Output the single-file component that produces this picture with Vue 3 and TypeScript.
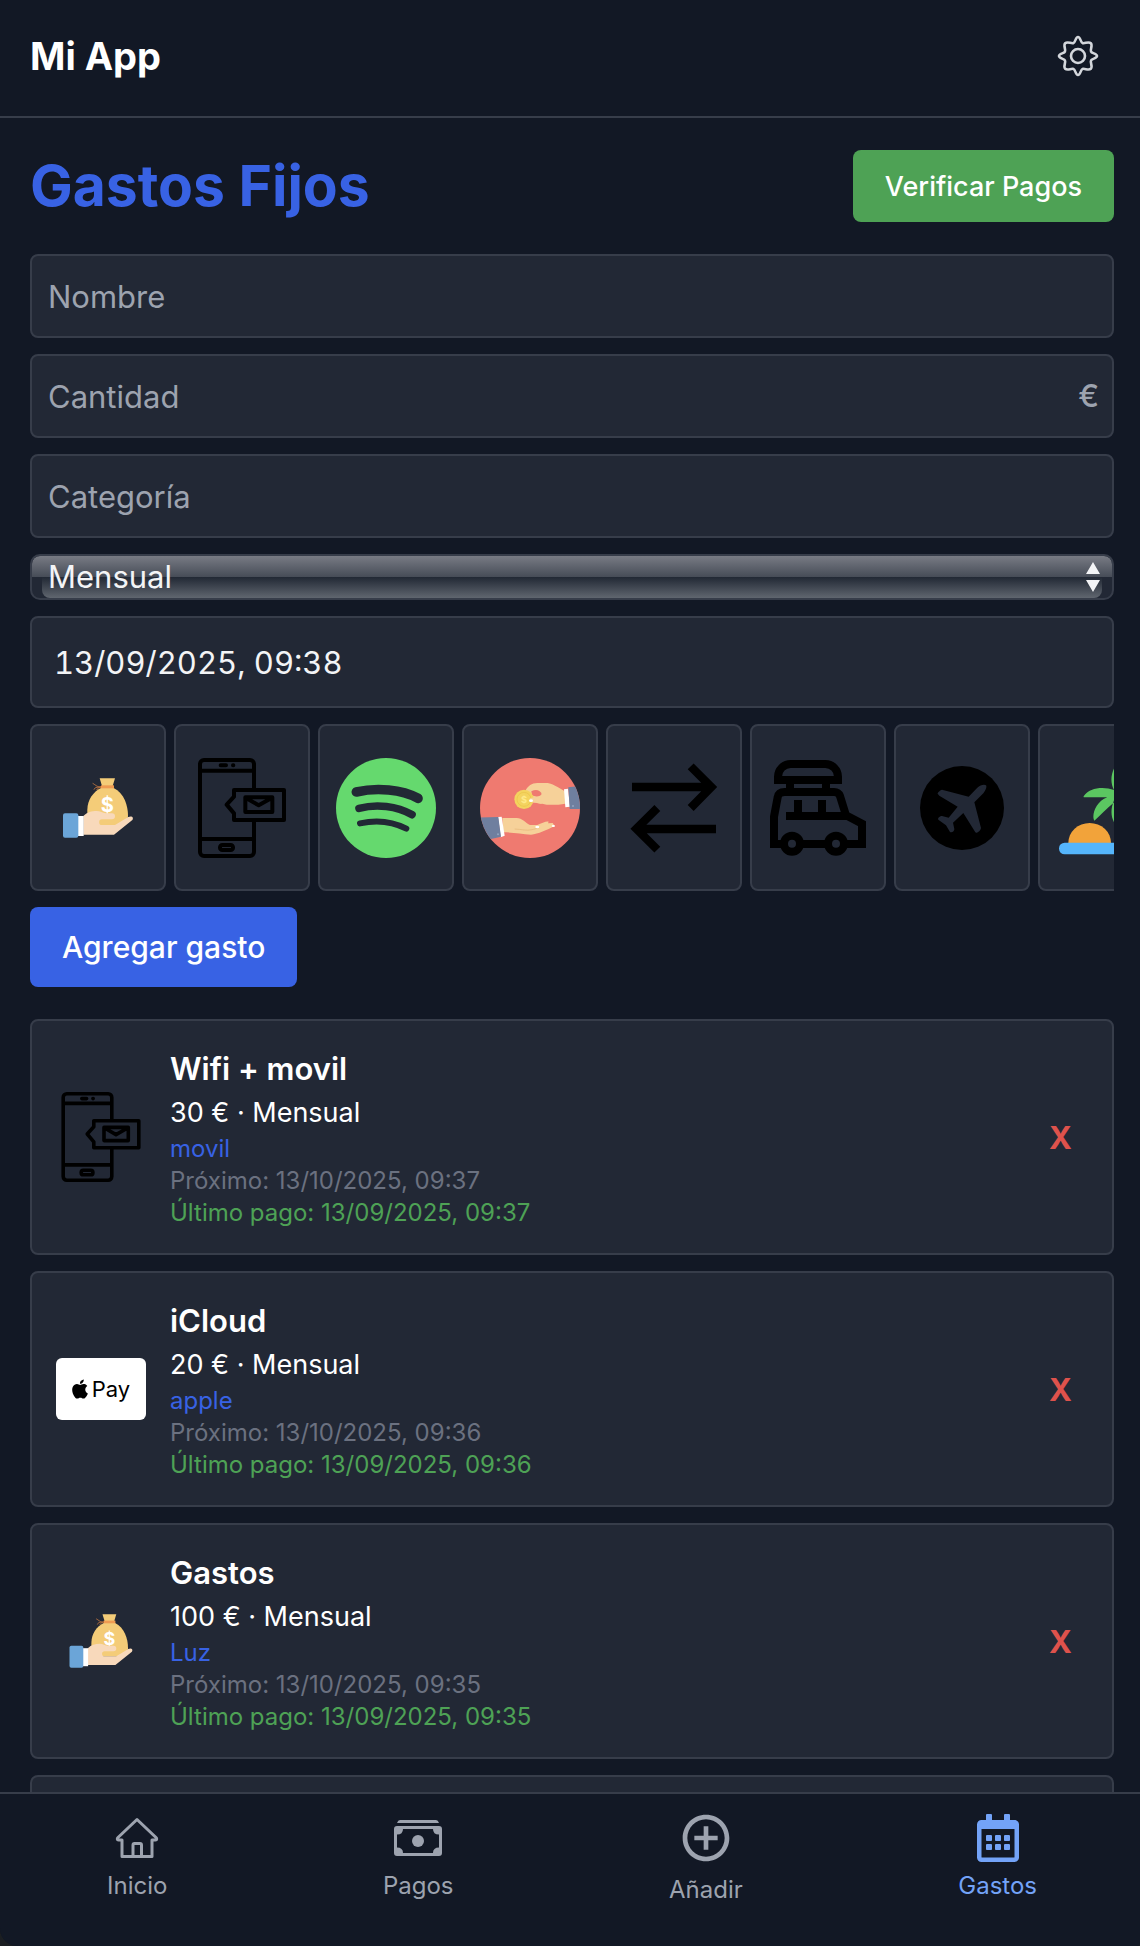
<script setup lang="ts">
import { ref } from 'vue'

type IconName = 'money' | 'phone' | 'spotify' | 'loan' | 'transfer' | 'car' | 'plane' | 'beach' | 'applepay'

interface Gasto {
  id: number
  nombre: string
  cantidad: number
  frecuencia: string
  categoria: string
  proximo: string
  ultimo: string
  icono: IconName
}

const nombre = ref('')
const cantidad = ref('')
const categoria = ref('')
const frecuencia = ref('Mensual')
const fecha = ref('13/09/2025, 09:38')

const iconos: IconName[] = ['money', 'phone', 'spotify', 'loan', 'transfer', 'car', 'plane', 'beach']

const gastos = ref<Gasto[]>([
  { id: 1, nombre: 'Wifi + movil', cantidad: 30, frecuencia: 'Mensual', categoria: 'movil', proximo: '13/10/2025, 09:37', ultimo: '13/09/2025, 09:37', icono: 'phone' },
  { id: 2, nombre: 'iCloud', cantidad: 20, frecuencia: 'Mensual', categoria: 'apple', proximo: '13/10/2025, 09:36', ultimo: '13/09/2025, 09:36', icono: 'applepay' },
  { id: 3, nombre: 'Gastos', cantidad: 100, frecuencia: 'Mensual', categoria: 'Luz', proximo: '13/10/2025, 09:35', ultimo: '13/09/2025, 09:35', icono: 'money' },
])

function quitar(id: number) {
  gastos.value = gastos.value.filter((g) => g.id !== id)
}
</script>

<template>
  <!-- Shared drawings, referenced by id -->
  <svg class="defs" width="0" height="0" aria-hidden="true">
    <symbol id="i-money" viewBox="144 144 300 300">
      <path d="M299 205H345L338 228H306Z" fill="#f4cc78" />
      <path d="M303 234H341C372 250 384 285 384 318C384 335 370 346 345 346H262V300C262 270 280 245 303 234Z" fill="#f4cc78" />
      <path d="M303 226H342V235H303Z" fill="#ef9b52" />
      <path d="M303 229C294 234 286 224 278 220M303 233C292 229 282 234 282 239M303 231C296 232 292 236 290 240" fill="none" stroke="#b9723f" stroke-width="3" />
      <text x="322" y="306" text-anchor="middle" font-family="Inter, sans-serif" font-size="60" font-weight="700" fill="#fff">$</text>
      <path d="M250 318C262 306 275 303 290 303C300 303 308 309 318 310H336A9 9 0 0 1 336 328H306A8 8 0 0 0 306 345H345L385 321C395 316 402 322 397 330L342 374H250Z" fill="#f8d9bb" />
      <rect x="233" y="318" width="18" height="60" fill="#fff" />
      <rect x="189" y="310" width="46" height="73" rx="6" fill="#6ba5d8" />
    </symbol>
    <symbol id="i-phone" viewBox="576 144 300 300">
      <g fill="none" stroke="#000" stroke-width="12" stroke-linejoin="round">
        <path d="M762 238V162A12 12 0 0 0 750 150H612A12 12 0 0 0 600 162V426A12 12 0 0 0 612 438H750A12 12 0 0 0 762 426V332" />
        <path d="M600 182H762M600 387H762" />
        <path d="M662 166H678M699 166H700" stroke-linecap="round" />
        <rect x="660" y="405" width="39" height="15" rx="7" />
        <path d="M702 240H852V330H702V310L680 284L702 260Z" />
        <path d="M736 262H817V306H736ZM738 264L776 286L815 264" />
      </g>
    </symbol>
    <symbol id="i-spotify" viewBox="1008 144 300 300">
      <circle cx="1158" cy="294" r="150" fill="#65d96e" />
      <g fill="none" stroke="#222835" stroke-linecap="round">
        <path d="M1069 246C1130 232 1205 238 1254 265" stroke-width="29" />
        <path d="M1077 295C1130 281 1190 288 1236 314" stroke-width="23" />
        <path d="M1080 340C1130 329 1175 333 1219 356" stroke-width="18" />
      </g>
    </symbol>
    <symbol id="i-loan" viewBox="90 144 300 300">
      <clipPath id="loan-clip"><circle cx="240" cy="294" r="150" /></clipPath>
      <g clip-path="url(#loan-clip)">
        <rect x="90" y="144" width="300" height="300" fill="#ef7a70" />
        <path d="M226 242C234 228 245 219 262 219H292C302 219 326 232 346 245V281C325 285 305 285 290 284C275 282 260 277 244 278Z" fill="#f6d199" />
        <path d="M244 244C258 237 270 240 275 252C268 262 255 260 246 256Z" fill="#ef7a70" />
        <circle cx="222" cy="268" r="29" fill="#f4d35f" />
        <circle cx="222" cy="268" r="21" fill="none" stroke="#eac348" stroke-width="2" />
        <text x="222" y="278" text-anchor="middle" font-family="Inter, sans-serif" font-size="28" font-weight="700" fill="#ffe98a">$</text>
        <path d="M240 264C255 262 270 262 275 262V282C262 280 255 276 240 276Z" fill="#f6d199" />
        <ellipse cx="243" cy="272" rx="6" ry="4" fill="#fff" />
        <path d="M342 238L354 236L360 290L346 292Z" fill="#fff" />
        <path d="M355 232L392 228V297H359Z" fill="#6f7f9f" />
        <circle cx="369" cy="288" r="3" fill="#93a4c0" />
        <path d="M157 324H200C216 324 228 340 240 345H262C275 340 288 333 296 335L294 340L308 339L314 348C290 360 265 372 243 374C215 372 190 367 160 367Z" fill="#f6d199" />
        <path d="M194 357C215 358 230 363 246 359C256 357 262 354 268 353" fill="none" stroke="#e5b678" stroke-width="2" />
        <ellipse cx="262" cy="351" rx="6" ry="4" fill="#fff" /><ellipse cx="310" cy="348" rx="5" ry="3" fill="#fff" />
        <path d="M144 321L155 320L164 377L152 382Z" fill="#fff" />
        <path d="M85 323L145 321L153 380L110 390Z" fill="#6f7f9f" />
        <circle cx="144" cy="373" r="3" fill="#93a4c0" />
      </g>
    </symbol>
    <symbol id="i-transfer" viewBox="522 144 300 300">
      <path d="M546 231H784M722 169L784 231L722 294M798 357H560M622 294L559 356L622 419" fill="none" stroke="#000" stroke-width="25" />
    </symbol>
    <symbol id="i-car" viewBox="954 144 300 300">
      <g fill="none" stroke="#000" stroke-width="24">
        <path d="M984 210V200A38 38 0 0 1 1022 162H1126A38 38 0 0 1 1164 200V210Z" />
        <path d="M1020 216V240M1128 216V240" />
        <path d="M1000 402H972V320L983 262C985 250 992 246 1004 246H1152C1163 246 1167 250 1170 258L1188 316L1236 341V402H1184M1052 402H1132" />
        <path d="M1008 318H1190M1044 270V318M1116 270V318" />
        <circle cx="1026" cy="401" r="24" />
        <circle cx="1158" cy="401" r="24" />
      </g>
    </symbol>
    <symbol id="i-plane" viewBox="156 144 300 300">
      <circle cx="306" cy="294" r="126" fill="#000" />
      <path d="M378 226C372 222 360 226 352 233L326 260L246 239C242 239 232 248 233 251L238 257L293 290L266 323L246 318C238 318 231 326 236 330L258 346L270 366C276 370 284 362 283 357L279 338L310 309L346 367C350 372 362 362 363 354L343 277L370 250C378 240 381 230 378 226Z" fill="#222835" />
    </symbol>
    <symbol id="i-beach" viewBox="588 144 300 300">
      <path d="M671 259C690 229 740 229 768 243V262H675C671 262 670 261 671 259ZM703 332C694 318 706 275 742 262H768V273C745 290 722 315 703 332ZM766 168C752 190 750 220 763 242H790V168ZM766 262C750 295 752 320 764 340L790 300Z" fill="#5bc661" />
      <path d="M625 399A64 60 0 0 1 753 399Z" fill="#f2a33a" />
      <rect x="597" y="398" width="280" height="35" rx="17" fill="#55b5fb" />
    </symbol>
  </svg>

  <div class="app">
    <header class="topbar">
      <span class="brand">Mi App</span>
      <button class="icon-button" type="button" aria-label="Ajustes">
        <svg width="48" height="48" viewBox="0 0 48 48" fill="none" stroke="#d3d6db" stroke-width="2.6" stroke-linejoin="round">
          <path d="M24 5C26.500 5 26.500 10.300 28.500 11C30.500 12 34.500 9 36.800 11.200C39 13.500 36 17.500 37 19.500C37.700 21.500 43 21.500 43 24C43 26.500 37.700 26.500 37 28.500C36 30.500 39 34.500 36.800 36.800C34.500 39 30.500 36 28.500 37C26.500 37.700 26.500 43 24 43C21.500 43 21.500 37.700 19.500 37C17.500 36 13.500 39 11.200 36.800C9 34.500 12 30.500 11 28.500C10.300 26.500 5 26.500 5 24C5 21.500 10.300 21.500 11 19.500C12 17.500 9 13.500 11.200 11.200C13.500 9 17.500 12 19.500 11C21.500 10.300 21.500 5 24 5Z" />
          <circle cx="24" cy="24" r="7" />
        </svg>
      </button>
    </header>

    <main class="content">
      <div class="heading">
        <h1>Gastos Fijos</h1>
        <button class="verify" type="button">Verificar Pagos</button>
      </div>

      <form class="form" @submit.prevent>
        <input v-model="nombre" class="field" type="text" placeholder="Nombre" aria-label="Nombre" />
        <div class="amount">
          <input v-model="cantidad" class="field" type="text" inputmode="decimal" placeholder="Cantidad" aria-label="Cantidad" />
          <span class="euro">€</span>
        </div>
        <input v-model="categoria" class="field" type="text" placeholder="Categoría" aria-label="Categoría" />
        <div class="select-wrap">
          <select v-model="frecuencia" aria-label="Frecuencia">
            <option>Mensual</option>
            <option>Anual</option>
          </select>
          <svg class="arrows" width="14" height="30" viewBox="0 0 14 30" fill="#f3f4f6" aria-hidden="true">
            <path d="M7 0L14 12H0ZM0 18H14L7 30Z" />
          </svg>
        </div>
        <input v-model="fecha" class="field date" type="text" aria-label="Fecha" />

        <div class="picker">
          <button v-for="icono in iconos" :key="icono" class="tile" type="button" :aria-label="icono">
            <svg width="100" height="100"><use :href="`#i-${icono}`" /></svg>
          </button>
        </div>

        <button class="add" type="submit">Agregar gasto</button>
      </form>

      <ul class="list">
        <li v-for="gasto in gastos" :key="gasto.id" class="card">
          <span v-if="gasto.icono === 'applepay'" class="applepay">
            <svg width="16" height="20" viewBox="2 0 20 24" aria-hidden="true">
              <path d="M12.152 6.896c-.948 0-2.415-1.078-3.960-1.040-2.040.027-3.910 1.183-4.961 3.014-2.117 3.675-.546 9.103 1.519 12.090 1.013 1.454 2.208 3.090 3.792 3.039 1.520-.065 2.090-.987 3.935-.987 1.831 0 2.350.987 3.960.948 1.637-.026 2.676-1.480 3.676-2.948 1.156-1.688 1.636-3.325 1.662-3.415-.039-.013-3.182-1.221-3.220-4.857-.026-3.040 2.480-4.494 2.597-4.559-1.429-2.090-3.623-2.324-4.390-2.376-2-.156-3.675 1.090-4.610 1.090zM15.530 3.830c.843-1.012 1.400-2.427 1.245-3.830-1.207.052-2.662.805-3.532 1.818-.780.896-1.454 2.338-1.273 3.714 1.338.104 2.715-.688 3.559-1.701" />
            </svg>
            <span>Pay</span>
          </span>
          <svg v-else class="card-icon" width="90" height="90" aria-hidden="true"><use :href="`#i-${gasto.icono}`" /></svg>
          <div class="info">
            <h2>{{ gasto.nombre }}</h2>
            <p class="sum">{{ gasto.cantidad }} € · {{ gasto.frecuencia }}</p>
            <p class="category">{{ gasto.categoria }}</p>
            <p class="next">Próximo: {{ gasto.proximo }}</p>
            <p class="last">Último pago: {{ gasto.ultimo }}</p>
          </div>
          <button class="remove" type="button" :aria-label="`Eliminar ${gasto.nombre}`" @click="quitar(gasto.id)">X</button>
        </li>
        <li class="card card-next"></li>
      </ul>
    </main>

    <nav class="tabs">
      <a href="#inicio">
        <svg width="48" height="48" viewBox="0 0 48 48" fill="none" stroke="currentColor" stroke-width="3" stroke-linejoin="round">
          <path d="M9 42.500V26H5.500C4 26 4 24.500 5 23.500L24 5.500L43 23.500C44 24.500 44 26 42.500 26H39V42.500Z" />
          <path d="M20 42V31Q20 29.500 21.500 29.500H27Q28.500 29.500 28.500 31V42" />
        </svg>
        <span>Inicio</span>
      </a>
      <a href="#pagos">
        <svg width="48" height="48" viewBox="0 0 48 48" fill="currentColor">
          <path d="M3 9Q4 6 6 6H42Q44 6 45 9Z" />
          <path fill-rule="evenodd" d="M3 12H45Q48 12 48 15V39Q48 42 45 42H3Q0 42 0 39V15Q0 12 3 12ZM9 15Q9 20.500 3 20.500V33.500Q9 33.500 9 39H39Q39 33.500 45 33.500V20.500Q39 20.500 39 15Z" />
          <circle cx="24" cy="27" r="6" />
        </svg>
        <span>Pagos</span>
      </a>
      <a href="#anadir">
        <svg width="56" height="56" viewBox="0 0 24 24" fill="currentColor">
          <path d="M13 7h-2v4H7v2h4v4h2v-4h4v-2h-4V7zm-1-5C6.480 2 2 6.480 2 12s4.480 10 10 10 10-4.480 10-10S17.520 2 12 2zm0 18c-4.410 0-8-3.590-8-8s3.590-8 8-8 8 3.590 8 8-3.590 8-8 8z" />
        </svg>
        <span>Añadir</span>
      </a>
      <a href="#gastos" class="active" aria-current="page">
        <svg width="42" height="48" viewBox="0 0 448 512" fill="currentColor">
          <path d="M148 288h-40c-6.600 0-12-5.400-12-12v-40c0-6.600 5.400-12 12-12h40c6.600 0 12 5.400 12 12v40c0 6.600-5.400 12-12 12zm108-12v-40c0-6.600-5.400-12-12-12h-40c-6.600 0-12 5.400-12 12v40c0 6.600 5.400 12 12 12h40c6.600 0 12-5.400 12-12zm96 0v-40c0-6.600-5.400-12-12-12h-40c-6.600 0-12 5.400-12 12v40c0 6.600 5.400 12 12 12h40c6.600 0 12-5.400 12-12zm-96 96v-40c0-6.600-5.400-12-12-12h-40c-6.600 0-12 5.400-12 12v40c0 6.600 5.400 12 12 12h40c6.600 0 12-5.400 12-12zm-96 0v-40c0-6.600-5.400-12-12-12h-40c-6.600 0-12 5.400-12 12v40c0 6.600 5.400 12 12 12h40c6.600 0 12-5.400 12-12zm192 0v-40c0-6.600-5.400-12-12-12h-40c-6.600 0-12 5.400-12 12v40c0 6.600 5.400 12 12 12h40c6.600 0 12-5.400 12-12zm96-260v352c0 26.500-21.500 48-48 48H48c-26.500 0-48-21.500-48-48V112c0-26.500 21.500-48 48-48h48V12c0-6.600 5.400-12 12-12h40c6.600 0 12 5.400 12 12v52h128V12c0-6.600 5.400-12 12-12h40c6.600 0 12 5.400 12 12v52h48c26.500 0 48 21.500 48 48zm-48 346V160H48v298c0 3.300 2.700 6 6 6h340c3.300 0 6-2.700 6-6z" />
        </svg>
        <span>Gastos</span>
      </a>
    </nav>
  </div>
</template>

<style>
body {
  background: #1b1e22;
}
</style>

<style scoped>
* {
  box-sizing: border-box;
  margin: 0;
}
.defs {
  position: absolute;
}
.app {
  display: flex;
  flex-direction: column;
  height: 100vh;
  overflow: hidden;
  background: #121825;
  color: #fff;
  font-family: Inter, "Liberation Sans", sans-serif;
  border-radius: 0 0 4px 18px;
}
button,
input,
select {
  font: inherit;
  color: inherit;
}
button {
  border: 0;
  background: none;
  padding: 0;
}
.topbar {
  display: flex;
  justify-content: space-between;
  align-items: center;
  padding: 28px 38px 32px 30px;
  border-bottom: 2px solid #373d4a;
}
.brand {
  font-size: 38px;
  line-height: 56px;
  font-weight: 700;
}
.icon-button {
  display: flex;
}
.content {
  flex: 1;
  min-height: 0;
  overflow-y: auto;
  scrollbar-width: none;
  padding: 32px 26px 32px 30px;
}
.heading {
  display: flex;
  justify-content: space-between;
  align-items: center;
  margin-bottom: 32px;
}
h1 {
  font-size: 57px;
  line-height: 72px;
  font-weight: 700;
  color: #3862e4;
}
.verify {
  height: 72px;
  padding: 0 32px;
  border-radius: 8px;
  background: #4ea255;
  font-size: 27px;
  font-weight: 500;
}
.form {
  display: flex;
  flex-direction: column;
  gap: 16px;
}
.field {
  display: block;
  width: 100%;
  height: 84px;
  padding: 0 16px;
  border: 2px solid #373d4a;
  border-radius: 8px;
  background: #222835;
  font-size: 31px;
  color: #f3f4f6;
}
.field::placeholder {
  color: #9da3af;
  opacity: 1;
}
.amount {
  position: relative;
}
.euro {
  position: absolute;
  right: 15px;
  top: 22px;
  font-size: 31px;
  font-weight: 500;
  line-height: 40px;
  color: #9da3af;
}
.date {
  height: 92px;
  padding: 0 22px;
  font-variant-numeric: tabular-nums;
}
.select-wrap {
  position: relative;
  height: 46px;
  border: 2px solid #373d4a;
  border-radius: 10px;
  overflow: hidden;
  background: #222835;
}
.select-wrap::before,
.select-wrap::after {
  content: "";
  position: absolute;
  height: 21px;
}
.select-wrap::before {
  inset: 0 0 auto;
  border-radius: 8px 8px 0 0;
  background: linear-gradient(#787b84, #464c57);
}
.select-wrap::after {
  inset: auto 10px 0;
  border-radius: 0 0 8px 8px;
  background: linear-gradient(#212834, #60666f);
}
select {
  position: relative;
  z-index: 1;
  display: block;
  width: 100%;
  height: 42px;
  padding: 0 16px;
  border: 0;
  background: none;
  appearance: none;
  font-size: 31px;
  line-height: 40px;
  color: #f3f4f6;
}
.arrows {
  position: absolute;
  z-index: 2;
  right: 12px;
  top: 6px;
  pointer-events: none;
}
.picker {
  display: flex;
  gap: 8px;
  overflow-x: auto;
  scrollbar-width: none;
}
.tile {
  display: flex;
  flex: none;
  align-items: center;
  height: 167px;
  padding: 0 16px;
  border: 2px solid #373d4a;
  border-radius: 8px;
  background: #222835;
}
.add {
  align-self: flex-start;
  height: 80px;
  padding: 0 32px;
  border-radius: 8px;
  background: #3862e4;
  font-size: 30px;
  font-weight: 500;
}
.list {
  display: flex;
  flex-direction: column;
  gap: 16px;
  margin-top: 32px;
  padding: 0;
  list-style: none;
}
.card {
  display: flex;
  align-items: center;
  gap: 24px;
  padding: 24px;
  border: 2px solid #373d4a;
  border-radius: 8px;
  background: #222835;
}
.card-next {
  height: 236px;
}
.card-icon {
  flex: none;
}
.applepay {
  display: flex;
  justify-content: center;
  align-items: center;
  gap: 4px;
  width: 90px;
  height: 62px;
  border-radius: 6px;
  background: #fff;
  color: #000;
  font-size: 22px;
}
.info {
  flex: 1;
}
h2 {
  font-size: 31px;
  line-height: 48px;
  font-weight: 600;
}
.sum {
  font-size: 27px;
  line-height: 40px;
}
.category,
.next,
.last {
  font-size: 24px;
  line-height: 32px;
}
.category {
  color: #3862e4;
}
.next {
  color: #6b7180;
}
.last {
  color: #4ea255;
}
.remove {
  padding: 0 16px;
  font-size: 31px;
  font-weight: 700;
  color: #de524c;
}
.tabs {
  display: flex;
  justify-content: space-between;
  align-items: center;
  padding: 16px 103px 40px 107px;
  border-top: 2px solid #373d4a;
  background: #121825;
}
.tabs a {
  display: flex;
  flex-direction: column;
  align-items: center;
  gap: 8px;
  font-size: 24px;
  line-height: 32px;
  color: #9da3af;
  text-decoration: none;
}
.tabs .active {
  color: #73a3f8;
}
</style>
